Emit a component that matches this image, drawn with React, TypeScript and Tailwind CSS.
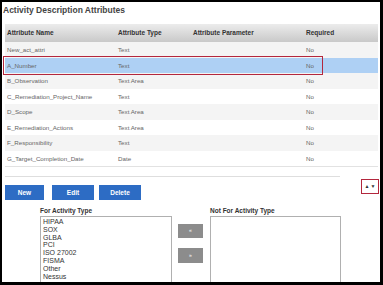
import React from "react";

type Attr = {
    name: string;
    type: string;
    required: string;
};

const attributes: Attr[] = [
    { name: "New_act_attri", type: "Text", required: "No" },
    { name: "A_Number", type: "Text", required: "No" },
    { name: "B_Observation", type: "Text Area", required: "No" },
    { name: "C_Remediation_Project_Name", type: "Text", required: "No" },
    { name: "D_Scope", type: "Text Area", required: "No" },
    { name: "E_Remediation_Actions", type: "Text Area", required: "No" },
    { name: "F_Responsibility", type: "Text", required: "No" },
    { name: "G_Target_Completion_Date", type: "Date", required: "No" },
];

const activityTypes = ["HIPAA", "SOX", "GLBA", "PCI", "ISO 27002", "FISMA", "Other", "Nessus"];

const App = () => {
    return (
        <div
            className="relative h-[285px] w-[383px] overflow-hidden bg-white border-t-2 border-l-2 border-r-[3px] border-b-[3px] border-black"
            style={{ fontFamily: '"Liberation Sans", Arial, sans-serif' }}
        >
            <div className="pl-[1px] pt-[2px] text-[8.5px] font-bold leading-[12px] text-[#444]">
                Activity Description Attributes
            </div>

            {/* attributes table */}
            <div className="relative ml-[3px] mr-[2px] mt-[8px] border-b border-[#e2e2e2]">
                <div className="flex h-[18px] items-center bg-gradient-to-b from-[#ececec] to-[#c9c9c9] text-[6.5px] font-bold text-[#333]">
                    <div className="w-[113px] pl-[2px]">Attribute Name</div>
                    <div className="w-[75px]">Attribute Type</div>
                    <div className="w-[113px]">Attribute Parameter</div>
                    <div className="flex-1">Required</div>
                </div>
                {attributes.map((a, i) => (
                    <div
                        key={a.name}
                        className={
                            "flex h-[15.5px] items-center text-[6.2px] text-[#666] " +
                            (i === 1 ? "bg-[#aed0f4]" : i % 2 === 0 ? "bg-[#f4f4f4]" : "bg-white")
                        }
                    >
                        <div className="w-[113px] pl-[2px]">{a.name}</div>
                        <div className="w-[75px]">{a.type}</div>
                        <div className="w-[113px]"></div>
                        <div className="flex-1">{a.required}</div>
                    </div>
                ))}
                {/* highlight frame around selected row */}
                <div className="absolute left-[-2px] top-[32px] h-[19px] w-[320px] border-[1.5px] border-[#b3273d]"></div>
            </div>

            <div className="ml-[3px] mt-[9px] h-px w-[335px] bg-[#dedede]"></div>

            <div className="mt-[7px] flex items-start pl-[3px] pr-[1px]">
                <div className="flex gap-[5px] pt-[1px]">
                    <button className="h-[15px] w-[39px] bg-[#2d6cc4] text-[6.5px] font-bold text-white">New</button>
                    <button className="ml-[3px] h-[15px] w-[42px] bg-[#2d6cc4] text-[6.5px] font-bold text-white">Edit</button>
                    <button className="h-[15px] w-[42px] bg-[#2d6cc4] text-[6.5px] font-bold text-white">Delete</button>
                </div>
                <div className="ml-auto -mt-[5px] flex h-[15px] w-[18px] items-center justify-center gap-[1px] border-[1.5px] border-[#b3273d] text-[5px] leading-none text-[#333]">
                    <span>▲</span>
                    <span>▼</span>
                </div>
            </div>

            {/* activity type lists */}
            <div className="mt-[7px] flex items-start pl-[38px]">
                <div>
                    <div className="text-[6.5px] font-bold leading-[8px] text-[#333]">For Activity Type</div>
                    <div className="mt-[1px] h-[70px] w-[132px] border border-[#b0b0b0] pl-[2px] pt-[1px] text-[7px] leading-[7.8px] text-[#333]">
                        {activityTypes.map((t) => (
                            <div key={t}>{t}</div>
                        ))}
                    </div>
                </div>
                <div className="ml-[6px] mt-[17px] flex flex-col gap-[10px]">
                    <button className="flex h-[14px] w-[25px] items-center justify-center bg-[#8c8c8c] text-[5px] text-white">«</button>
                    <button className="flex h-[15px] w-[25px] items-center justify-center bg-[#8c8c8c] text-[5px] text-white">»</button>
                </div>
                <div className="ml-[7px]">
                    <div className="text-[6.5px] font-bold leading-[8px] text-[#333]">Not For Activity Type</div>
                    <div className="mt-[1px] h-[70px] w-[131px] border border-[#b0b0b0]"></div>
                </div>
            </div>
        </div>
    );
};

export default App;
